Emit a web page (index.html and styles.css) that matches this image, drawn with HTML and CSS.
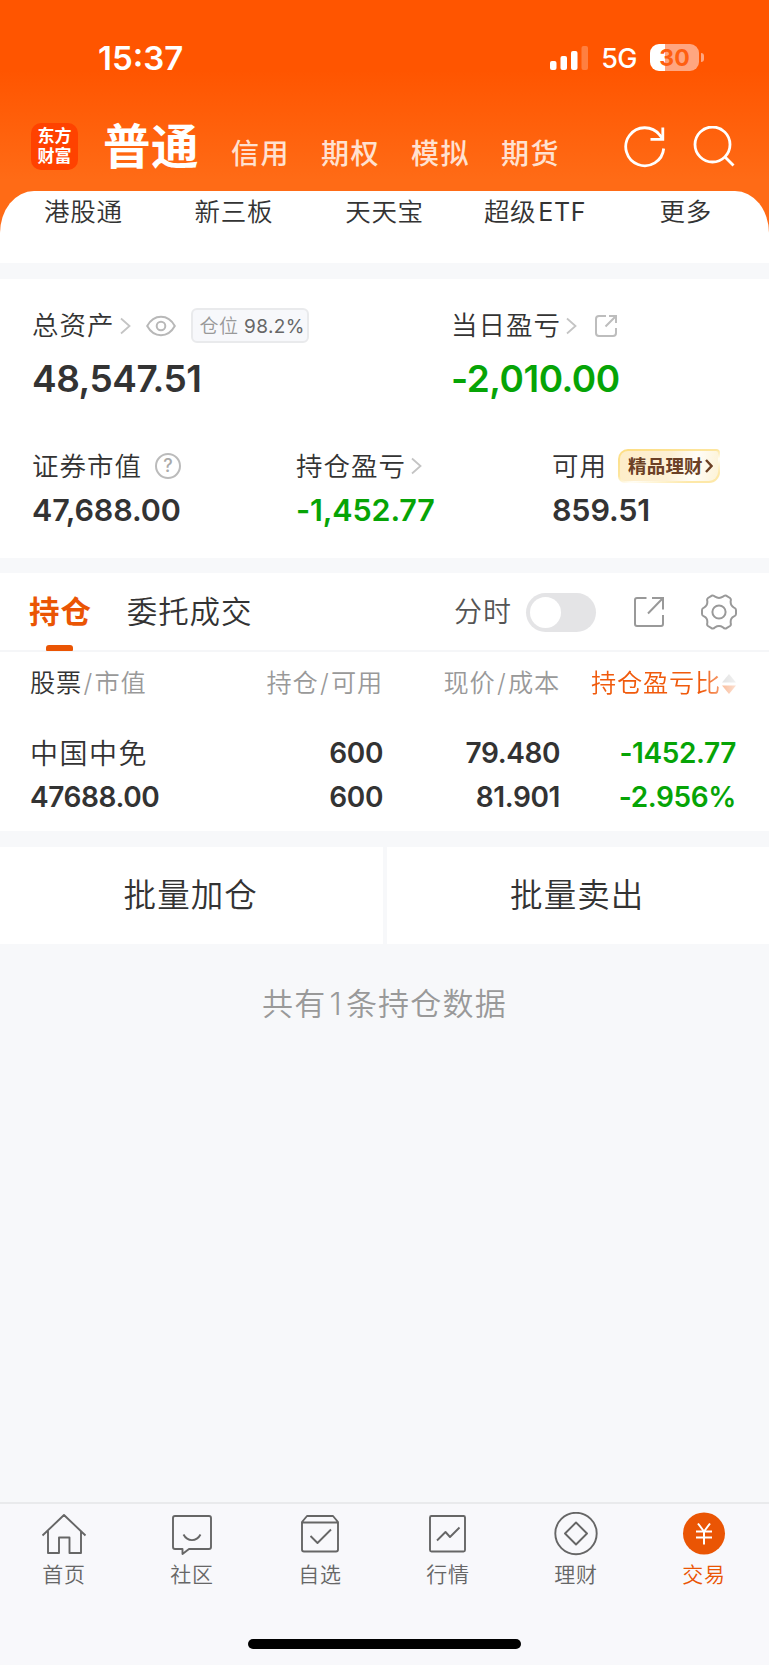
FILE: index.html
```html
<!DOCTYPE html>
<html lang="zh-CN">
<head>
  <meta charset="UTF-8" />
  <meta name="viewport" content="width=device-width, initial-scale=1.0"/>
  <title>东方财富 - 交易</title>
  <link rel="stylesheet" href="styles.css">
</head>
<body>
  <header class="header">
    <div class="status">
      <span class="time">15:37</span>
      <svg class="signal" width="38" height="24" viewBox="0 0 38 24" fill="#fff">
        <rect x="0" y="15" width="6.5" height="9" rx="2"/>
        <rect x="10.5" y="10" width="6.5" height="14" rx="2"/>
        <rect x="21" y="5" width="6.5" height="19" rx="2"/>
        <rect x="31.5" y="0" width="6.5" height="24" rx="2" opacity="0.25"/>
      </svg>
      <span class="network">5G</span>
      <span class="battery">30</span>
      <span class="battery-tip"></span>
    </div>
    <div class="nav">
      <div class="logo"><span>东方</span><span>财富</span></div>
      <h1>普通</h1>
      <nav class="modes">
        <a>信用</a>
        <a>期权</a>
        <a>模拟</a>
        <a>期货</a>
      </nav>
      <svg class="refresh" width="42" height="42" viewBox="0 0 42 42" fill="none" stroke="#fff" stroke-width="2.8">
        <path d="M39.700 22.500a19 19 0 1 1-4-13.500L39 13"/>
        <path d="M38.800 1.500v11.800H26.500"/>
      </svg>
      <svg class="search" width="42" height="42" viewBox="0 0 42 42" fill="none" stroke="#fff" stroke-width="2.8">
        <circle cx="19.5" cy="18.5" r="17.5"/>
        <path d="M31.5 30.5l9 9"/>
      </svg>
    </div>
    <div class="shortcuts">
      <a>港股通</a>
      <a>新三板</a>
      <a>天天宝</a>
      <a>超级<span>ETF</span></a>
      <a>更多</a>
    </div>
  </header>

  <section class="assets">
    <div class="assets-top">
      <div>
        <div class="label">
          <span>总资产</span>
          <svg class="chevron" width="11" height="18" viewBox="0 0 11 18"><path d="M1 1.5l8.5 7.5L1 16.5"/></svg>
          <svg class="eye" width="30" height="22" viewBox="0 0 30 22" fill="none" stroke="#b8b8b8" stroke-width="2">
            <path d="M1.200 11C4.500 5 9.500 1.800 15 1.800S25.500 5 28.800 11C25.500 17 20.500 20.200 15 20.200S4.500 17 1.200 11z"/>
            <circle cx="15" cy="11" r="4.300"/>
          </svg>
          <span class="position">仓位 <b>98.2%</b></span>
        </div>
        <div class="value big">48,547.51</div>
      </div>
      <div>
        <div class="label">
          <span>当日盈亏</span>
          <svg class="chevron" width="11" height="18" viewBox="0 0 11 18"><path d="M1 1.5l8.5 7.5L1 16.5"/></svg>
          <svg class="share-small" width="22" height="22" viewBox="0 0 22 22" fill="none" stroke="#bdbdbd" stroke-width="2">
            <path d="M11 1H4a3 3 0 0 0-3 3v14a3 3 0 0 0 3 3h14a3 3 0 0 0 3-3v-5"/>
            <path d="M14 1h7v7M21 1L10.500 11.500"/>
          </svg>
        </div>
        <div class="value big down">-2,010.00</div>
      </div>
    </div>
    <div class="assets-bottom">
      <div>
        <div class="label">
          <span>证券市值</span>
          <span class="help">?</span>
        </div>
        <div class="value">47,688.00</div>
      </div>
      <div>
        <div class="label">
          <span>持仓盈亏</span>
          <svg class="chevron" width="11" height="18" viewBox="0 0 11 18"><path d="M1 1.5l8.5 7.5L1 16.5"/></svg>
        </div>
        <div class="value down">-1,452.77</div>
      </div>
      <div>
        <div class="label">
          <span>可用</span>
          <span class="promo">精品理财<svg width="8" height="14" viewBox="0 0 8 14" fill="none" stroke="#6b4024" stroke-width="2.4"><path d="M1 1l5.500 6L1 13"/></svg></span>
        </div>
        <div class="value">859.51</div>
      </div>
    </div>
  </section>

  <section class="holdings">
    <div class="tabs">
      <a class="tab active">持仓</a>
      <a class="tab">委托成交</a>
      <span class="switch-label">分时</span>
      <span class="switch"></span>
      <svg class="share" width="30" height="30" viewBox="0 0 30 30" fill="none" stroke="#999" stroke-width="2">
        <path d="M12.500 1H3a2 2 0 0 0-2 2v24a2 2 0 0 0 2 2h24a2 2 0 0 0 2-2v-9"/>
        <path d="M18 1h11v11.500M29 1L14 16.500"/>
      </svg>
      <svg class="gear" width="36" height="36" viewBox="0 0 36 36" fill="none" stroke="#999" stroke-width="2" stroke-linejoin="round">
        <path d="M10.500 1.800Q12.500 1 14 2.700Q18 5.200 22 2.700Q23.500 1 25.500 1.800L29 4Q30.300 5 29.700 7Q29.200 11.800 33 13.600Q34.900 14.200 35 16V20Q34.900 21.800 33 22.400Q29.200 24.200 29.700 29Q30.300 31 29 32L25.500 34.200Q23.500 35 22 33.300Q18 30.800 14 33.300Q12.500 35 10.500 34.200L7 32Q5.700 31 6.300 29Q6.800 24.200 3 22.400Q1.100 21.800 1 20V16Q1.100 14.200 3 13.600Q6.800 11.800 6.300 7Q5.700 5 7 4Z"/>
        <circle cx="18" cy="18" r="6.600"/>
      </svg>
    </div>

    <div class="row row-head">
      <span><em>股票</em><i>/</i>市值</span>
      <span>持仓<i>/</i>可用</span>
      <span>现价<i>/</i>成本</span>
      <span class="sorted">持仓盈亏比<svg class="sort" width="16" height="22" viewBox="0 0 16 22"><path d="M8 1l7 8.500H1z" fill="#ccc"/><path d="M8 21l7-8.500H1z" fill="#f58a50"/></svg></span>
    </div>
    <div class="row row-body">
      <span class="name">中国中免</span>
      <span>600</span>
      <span>79.480</span>
      <span class="down">-1452.77</span>
      <span>47688.00</span>
      <span>600</span>
      <span>81.901</span>
      <span class="down">-2.956%</span>
    </div>
  </section>

  <div class="batch">
    <button>批量加仓</button>
    <button>批量卖出</button>
  </div>

  <p class="summary">共有<span>1</span>条持仓数据</p>

  <footer class="tabbar">
    <a>
      <svg width="46" height="44" viewBox="0 0 46 44">
        <path d="M1.500 23.500L23 3l21.500 20.500M7 19v22h11V25.500h10.500V41H40V19"/>
      </svg>
      首页
    </a>
    <a>
      <svg width="46" height="44" viewBox="0 0 46 44">
        <path d="M6 4h34a2 2 0 0 1 2 2v29a2 2 0 0 1-2 2H20l-6.500 5V37H6a2 2 0 0 1-2-2V6a2 2 0 0 1 2-2z"/>
        <path d="M14.500 22.500c4 7.500 13 7.500 17 0"/>
      </svg>
      社区
    </a>
    <a>
      <svg width="46" height="44" viewBox="0 0 46 44">
        <path d="M10 4h26l5 6v27.500a2 2 0 0 1-2 2H7a2 2 0 0 1-2-2V10zM5 10.500h36M13.500 24l7 7L34 17.500"/>
      </svg>
      自选
    </a>
    <a>
      <svg width="46" height="44" viewBox="0 0 46 44">
        <rect x="5" y="4" width="35" height="35.500" rx="1.500"/>
        <path d="M12 28.500l8.500-8.500 4.500 5 9.500-9.500"/>
      </svg>
      行情
    </a>
    <a>
      <svg width="46" height="44" viewBox="0 0 46 44">
        <circle cx="23" cy="21.500" r="20.700"/>
        <path d="M23 10.500l11 11-11 11-11-11z"/>
      </svg>
      理财
    </a>
    <a class="active">
      <svg width="46" height="44" viewBox="0 0 46 44">
        <circle class="coin" cx="23" cy="21.500" r="21"/>
        <path class="yen" d="M17 11.500l6 8 6-8M23 19.500v13M15 19.500h16M15 25.500h16"/>
      </svg>
      交易
    </a>
    <div class="home-indicator"></div>
  </footer>
</body>
</html>
```
FILE: styles.css
```css
* {
  box-sizing: border-box;
}

body {
  margin: 0;
  min-height: 1665px;
  display: flex;
  flex-direction: column;
  font-family: Inter, "Noto Sans CJK SC", sans-serif;
  font-weight: 350;
  background: #f7f8fa;
  color: #333;
}

svg {
  display: block;
  flex: none;
}

/* header */
.header {
  height: 263px;
  background: linear-gradient(#ff5500 0, #ff5500 70px, #ff6b16 180px, #ff6b16 100%);
}

.status {
  height: 115px;
  padding: 0 65px 0 98px;
  display: flex;
  align-items: center;
  color: #fff;
}

.time {
  font-size: 33px;
  font-weight: 600;
  margin-right: auto;
}

.network {
  font-size: 27px;
  font-weight: 450;
  margin: 2px 13px 0 13px;
  letter-spacing: -0.5px;
}

.battery {
  width: 49px;
  height: 27px;
  line-height: 28px;
  border-radius: 9px;
  text-align: center;
  font-size: 23px;
  font-weight: 700;
  color: #ff5f10;
  background: linear-gradient(90deg, #fff 15px, #ffa680 15px);
}

.battery-tip {
  width: 3px;
  height: 9px;
  margin-left: 2px;
  border-radius: 0 4px 4px 0;
  background: #ffa680;
}

.nav {
  height: 76px;
  padding: 0 34px 0 31px;
  display: flex;
  align-items: flex-start;
  color: #fff;
}

.logo {
  width: 47px;
  height: 47px;
  margin-top: 8px;
  padding-top: 4px;
  border-radius: 10px;
  background: #ff4200;
  font-size: 17px;
  font-weight: 700;
  line-height: 19.5px;
  text-align: center;
}

.logo span {
  display: block;
}

h1 {
  margin: 3px 0 0 25px;
  font-size: 47.5px;
  line-height: 57px;
  font-weight: 700;
  letter-spacing: 0.5px;
}

.modes {
  display: flex;
  gap: 31px;
  margin: 19px auto 0 32px;
  font-size: 28px;
  line-height: 40px;
  font-weight: 500;
  letter-spacing: 1.5px;
  color: #ffe1d0;
}

.refresh {
  margin-top: 11px;
}

.search {
  margin: 11px 0 0 27px;
}

.shortcuts {
  height: 72px;
  padding: 0 8px;
  display: grid;
  grid-template-columns: repeat(5, 1fr);
  border-radius: 34px 34px 0 0 / 42px 42px 0 0;
  background: #fff;
  font-size: 25.5px;
  line-height: 41px;
  letter-spacing: 0.7px;
  text-align: center;
}

.shortcuts span {
  margin-left: 2px;
  font-size: 25px;
  font-weight: 400;
}

/* assets */
.assets {
  height: 279px;
  margin-top: 16px;
  padding: 24px 32px 0;
  background: #fff;
}

.assets-top {
  display: grid;
  grid-template-columns: 419px 1fr;
}

.assets-bottom {
  display: grid;
  grid-template-columns: 264px 256px 1fr;
  margin-top: 47px;
}

.label {
  height: 36px;
  display: flex;
  align-items: center;
  font-size: 26.5px;
  line-height: 37px;
  letter-spacing: 1px;
}

.assets-top .label {
  height: 45px;
}

.value {
  margin-top: 8px;
  font-size: 30.5px;
  line-height: 36px;
  font-weight: 600;
  letter-spacing: -0.15px;
}

.value.big {
  margin-top: 9px;
  font-size: 37px;
  line-height: 44px;
  letter-spacing: -0.5px;
}

.down {
  color: #06a406;
}

.chevron {
  margin-left: 5px;
  fill: none;
  stroke: #c4c4c4;
  stroke-width: 1.8;
}

.eye {
  margin-left: 15px;
}

.position {
  height: 35px;
  margin-left: 15px;
  padding: 0 2px 0 7px;
  border: 2px solid #e9eaec;
  border-radius: 6px;
  background: #f7f8fb;
  color: #999;
  font-size: 19px;
  line-height: 33px;
  letter-spacing: 0.4px;
}

.position b {
  font-weight: 400;
  color: #666;
}

.share-small {
  margin-left: 18px;
}

.help {
  width: 26px;
  height: 26px;
  margin-left: 13px;
  border: 2px solid #bbb;
  border-radius: 50%;
  color: #aaa;
  font-size: 18px;
  font-weight: 500;
  line-height: 22px;
  letter-spacing: 0;
  text-align: center;
}

.promo {
  width: 102px;
  height: 34px;
  margin-left: 11px;
  padding-left: 8px;
  display: flex;
  align-items: center;
  gap: 2px;
  border: 2px solid transparent;
  border-radius: 10px 4px 11px 7px;
  background:
    linear-gradient(100deg, #fdedc8, #fdf0d4 50%, #fffdf8 75%, #fdf3d6) padding-box,
    linear-gradient(165deg, #fddd80, #fde6a0 45%, #fffdf5 60%, #fde8a8 85%) border-box;
  color: #6b4024;
  font-size: 18.5px;
  font-weight: 700;
  letter-spacing: 0.2px;
}

/* holdings */
.holdings {
  height: 258px;
  margin-top: 15px;
  background: #fff;
}

.tabs {
  height: 79px;
  padding: 1px 32px 0 29px;
  display: flex;
  align-items: center;
  border-bottom: 2px solid #f5f6f8;
}

.tab {
  position: relative;
  margin-right: 35px;
  font-size: 30.5px;
  line-height: 78px;
  letter-spacing: 0.9px;
}

.tab.active {
  font-weight: 700;
  color: #ea5504;
}

.tab.active::after {
  content: "";
  position: absolute;
  left: 17px;
  bottom: 0;
  width: 27px;
  height: 6px;
  border-radius: 3px 3px 1px 1px;
  background: #ea5504;
}

.switch-label {
  margin-left: auto;
  font-size: 28px;
  line-height: 40px;
  letter-spacing: 1px;
  color: #555;
}

.switch {
  width: 70px;
  height: 39px;
  margin-left: 14px;
  padding: 4px;
  border-radius: 20px;
  background: #e4e4e6;
}

.switch::before {
  content: "";
  display: block;
  width: 31px;
  height: 31px;
  border-radius: 50%;
  background: #fff;
}

.share {
  margin-left: 38px;
}

.gear {
  margin-left: 37px;
}

.row {
  display: grid;
  grid-template-columns: 200px 153px 177px 176px;
  padding-left: 30px;
  text-align: right;
}

.row span:nth-child(4n + 1) {
  text-align: left;
}

.row-head {
  height: 62px;
  font-size: 25.2px;
  line-height: 63px;
  letter-spacing: 0.8px;
  color: #999;
}

.row-head em {
  font-style: normal;
  color: #333;
}

.row-head i {
  font-style: normal;
  margin: 0 1.5px;
}

.row-head .sorted {
  display: flex;
  align-items: center;
  justify-content: flex-end;
  margin-right: -1px;
  color: #f05a0c;
  mask-image: linear-gradient(90deg, #000 calc(100% - 36px), rgba(0, 0, 0, 0.25));
}

.row-body {
  margin-top: 18px;
  font-size: 28px;
  line-height: 42.5px;
  font-weight: 600;
  letter-spacing: -0.4px;
}

.row-body .name {
  font-weight: 350;
  line-height: 44px;
  letter-spacing: 1.5px;
}

/* batch buttons */
.batch {
  display: grid;
  grid-template-columns: 1fr 1fr;
  gap: 4px;
  margin-top: 16px;
}

.batch button {
  height: 97px;
  padding: 1px 1px 0 0;
  border: none;
  background: #fff;
  color: #333;
  font-family: inherit;
  font-weight: inherit;
  font-size: 32.5px;
  line-height: 96px;
  letter-spacing: 1.1px;
}

.summary {
  margin: 40px 0 0;
  font-size: 31px;
  line-height: 40px;
  letter-spacing: 1.2px;
  text-align: center;
  color: #999;
}

.summary span {
  margin: 0 3px;
}

/* bottom bar */
.tabbar {
  height: 163px;
  margin-top: auto;
  display: grid;
  grid-template-columns: repeat(6, 128px);
  grid-template-rows: 135px 1fr;
  border-top: 2px solid #e9eaec;
  background: #f8f8fb;
}

.tabbar a {
  display: flex;
  flex-direction: column;
  align-items: center;
  padding-top: 8px;
  font-size: 21px;
  line-height: 37px;
  letter-spacing: 0.8px;
  color: #666;
}

.tabbar svg {
  fill: none;
  stroke: #666;
  stroke-width: 1.9;
  stroke-linejoin: round;
}

.tabbar .active {
  color: #ea5504;
}

.tabbar .coin {
  fill: #ea5504;
  stroke: none;
}

.tabbar .yen {
  stroke: #fff;
  stroke-width: 2;
}

.home-indicator {
  grid-column: 1 / -1;
  justify-self: center;
  width: 273px;
  height: 10px;
  border-radius: 5px;
  background: #000;
}
```
